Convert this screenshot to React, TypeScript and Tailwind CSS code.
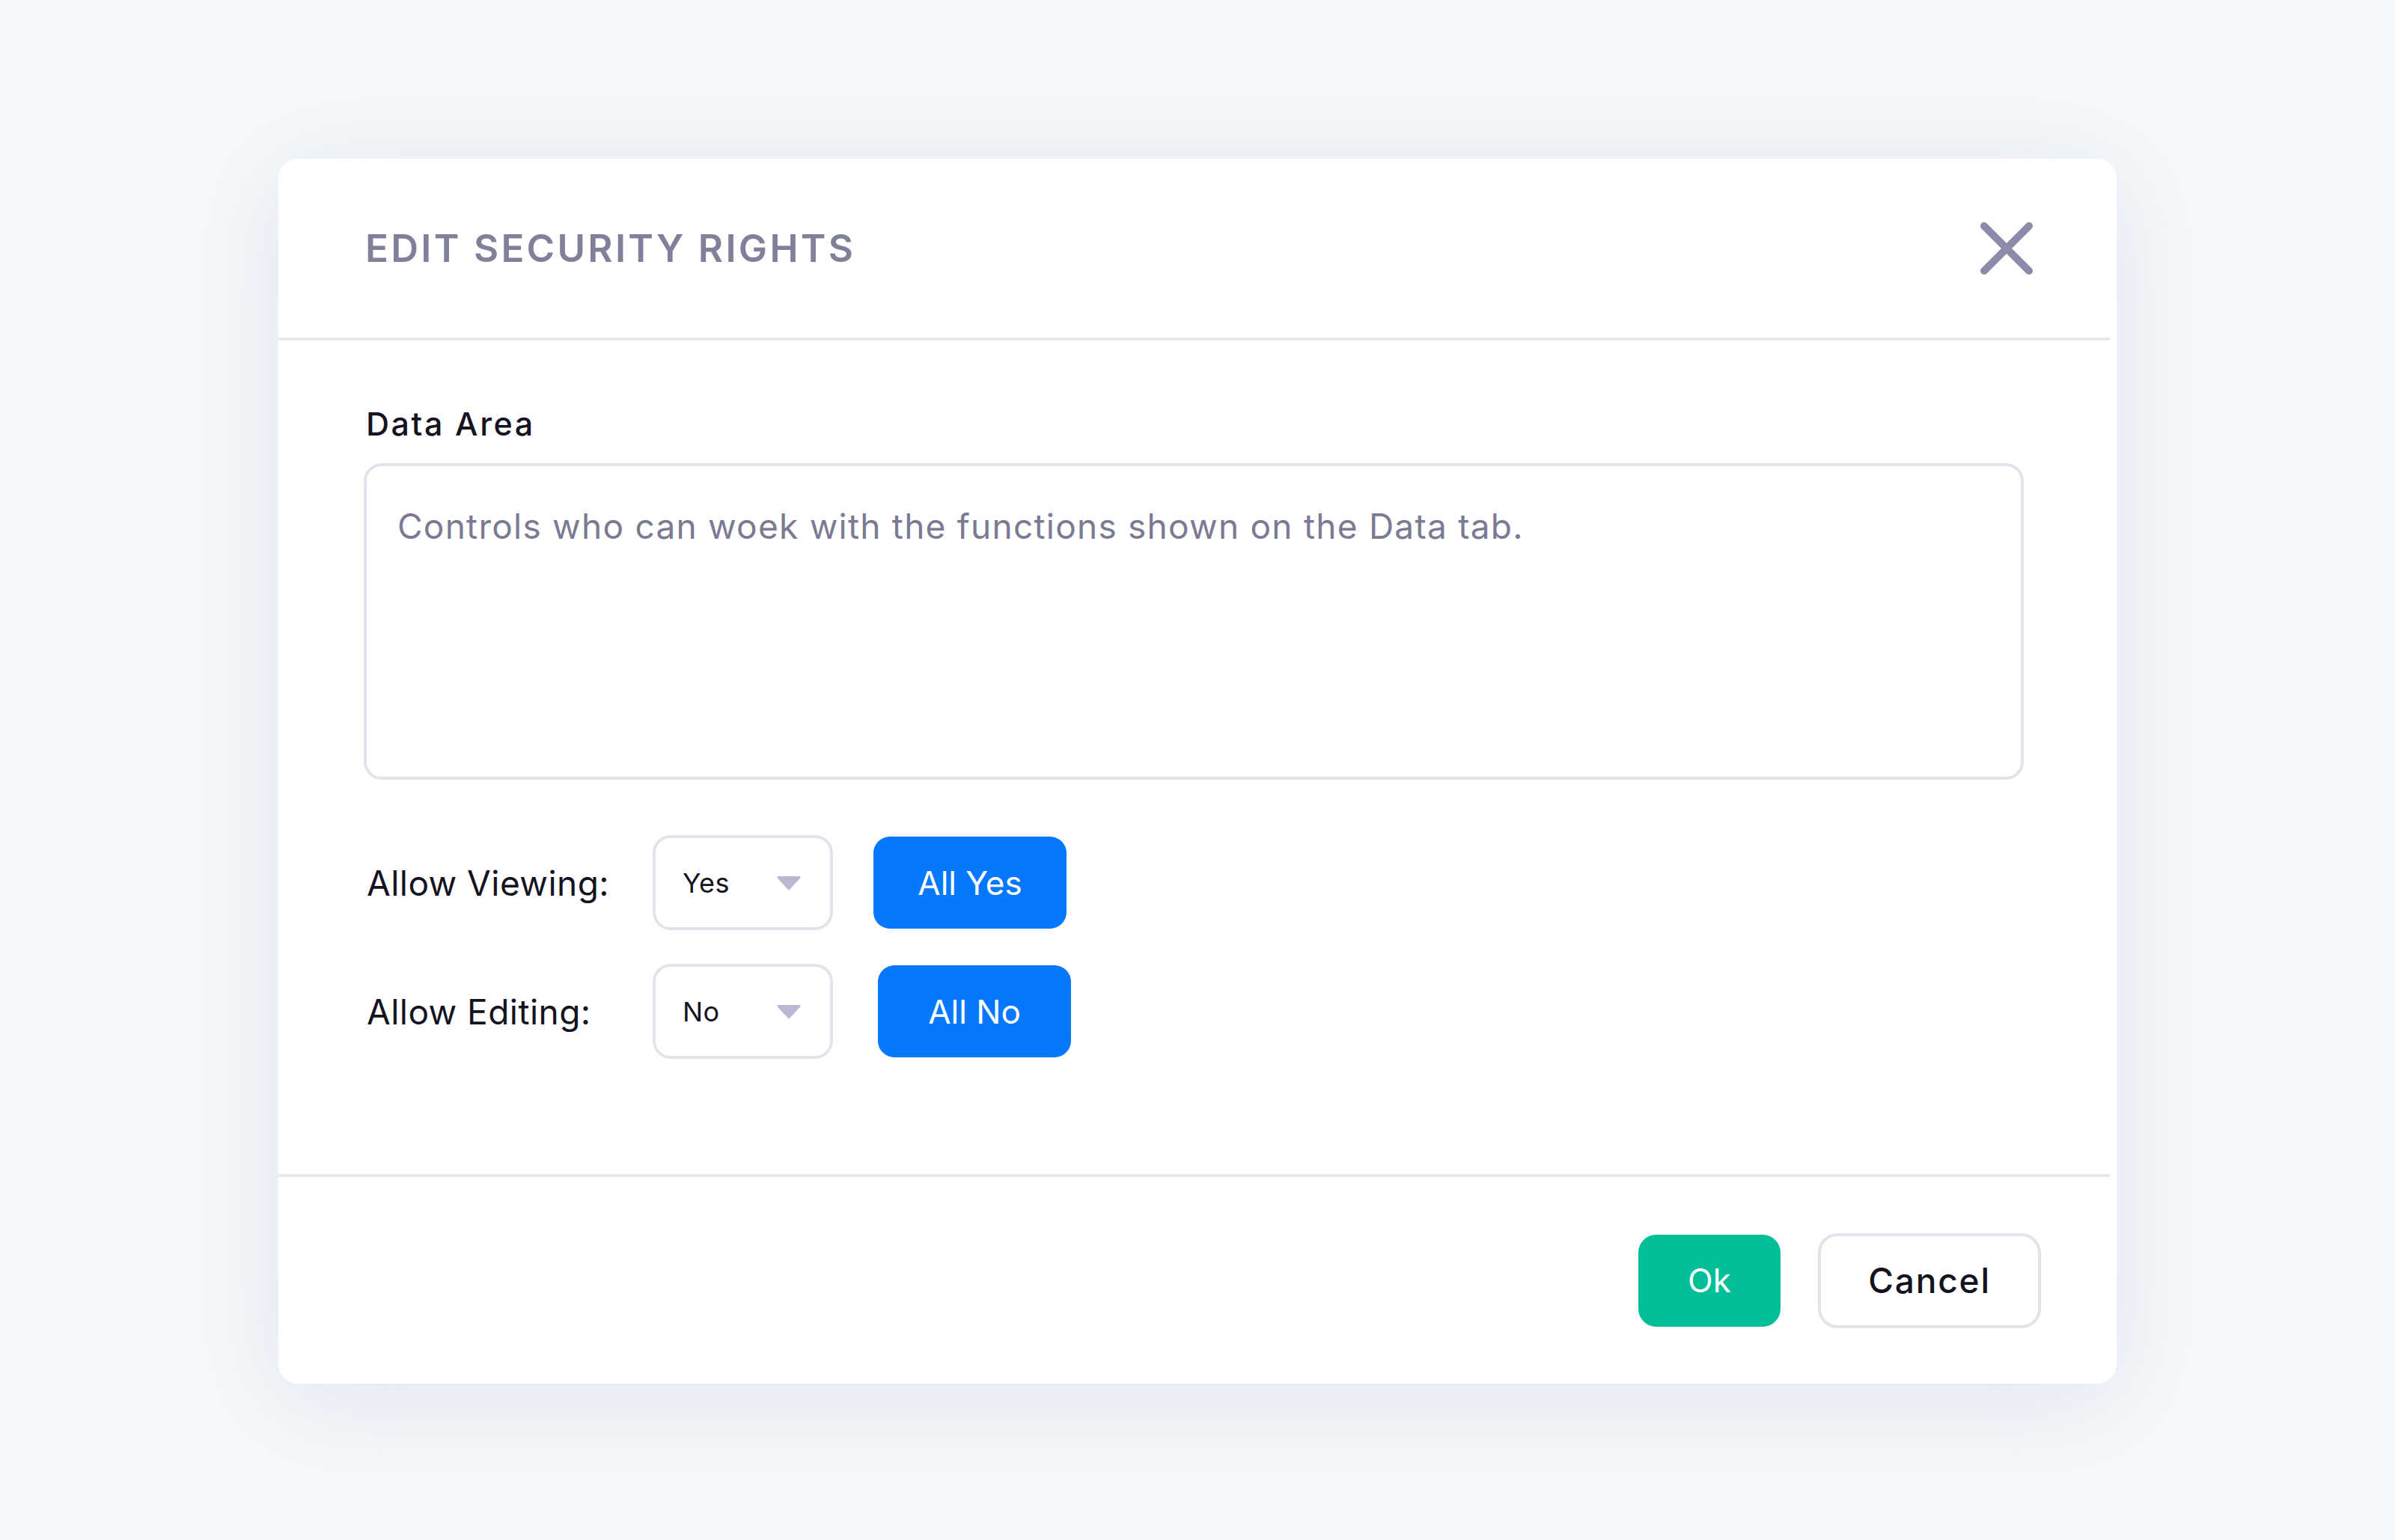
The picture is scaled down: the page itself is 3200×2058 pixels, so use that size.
import { useState } from "react";

const font = { fontFamily: "Inter, 'Noto Sans', sans-serif" };

function CloseIcon() {
  return (
    <svg width="72" height="72" viewBox="0 0 72 72" fill="none">
      <path d="M6 6 L66 66 M66 6 L6 66" stroke="#8a8ca9" strokeWidth="10" strokeLinecap="round" />
    </svg>
  );
}

function Caret() {
  return (
    <svg width="32" height="20" viewBox="0 0 32 20">
      <path d="M2 1 H30 a1.5 1.5 0 0 1 1.2 2.4 L17.2 18.6 a1.5 1.5 0 0 1 -2.4 0 L0.8 3.4 A1.5 1.5 0 0 1 2 1 Z" fill="#b9b8d3" />
    </svg>
  );
}

function Select({ value }: { value: string }) {
  return (
    <div className="flex h-[127px] w-[241px] items-center justify-between rounded-[24px] border-[4px] border-[#e3e4eb] bg-white pl-[36px] pr-[39px]">
      <span className="text-[36px] leading-none tracking-[0.01em] text-[#14131f]">{value}</span>
      <Caret />
    </div>
  );
}

function RightsRow({
  label,
  value,
  action,
  gap,
}: {
  label: string;
  value: string;
  action: string;
  gap: string;
}) {
  return (
    <div className="flex items-center">
      <div className="w-[386px] pl-[4px] text-[46px] leading-none tracking-[0.01em] text-[#14131f]">{label}</div>
      <Select value={value} />
      <button
        className={`${gap} flex h-[123px] w-[258px] items-center justify-center rounded-[22px] bg-[#0578fd] text-[44px] leading-none text-white`}
      >
        {action}
      </button>
    </div>
  );
}

export default function App() {
  const [text] = useState("Controls who can woek with the functions shown on the Data tab.");

  return (
    <div className="min-h-[2058px] w-full bg-[#f6f9fc] pl-[372px] pt-[212px]" style={font}>
      <div className="w-[2456px] rounded-[26px] bg-white shadow-[0_20px_140px_rgba(170,185,210,0.30)]">
        {/* header */}
        <div className="flex h-[239px] items-center justify-between pl-[116px] pr-[111px]">
          <h1 className="text-[51px] font-semibold uppercase leading-none tracking-[0.065em] text-[#80809a]">
            Edit Security Rights
          </h1>
          <CloseIcon />
        </div>
        <div className="mr-[9px] h-[4px] bg-[#e8e9ee]" />

        {/* body */}
        <div className="pb-[154px] pl-[114px] pr-[124px] pt-[90px]">
          <div className="pl-[3px] text-[43px] font-medium leading-none tracking-[0.06em] text-[#14131f]">
            Data Area
          </div>
          <div className="mt-[31px] h-[423px] w-[2218px] rounded-[24px] border-[4px] border-[#e3e4eb] pl-[41px] pt-[57px]">
            <p className="text-[46px] leading-none tracking-[0.027em] text-[#7b7a93]">{text}</p>
          </div>
          <div className="mt-[74px] flex flex-col gap-[45px]">
            <RightsRow label="Allow Viewing:" value="Yes" action="All Yes" gap="ml-[54px]" />
            <RightsRow label="Allow Editing:" value="No" action="All No" gap="ml-[60px]" />
          </div>
        </div>

        <div className="mr-[9px] h-[4px] bg-[#e8e9ee]" />

        {/* footer */}
        <div className="flex h-[276px] items-center justify-end gap-[50px] pr-[101px]">
          <button className="flex h-[123px] w-[190px] items-center justify-center rounded-[24px] bg-[#00bf96] text-[44px] leading-none text-white">
            Ok
          </button>
          <button className="flex h-[127px] w-[298px] items-center justify-center rounded-[26px] border-[4px] border-[#e3e4eb] bg-white text-[46px] font-medium leading-none tracking-[0.04em] text-[#14131f]">
            Cancel
          </button>
        </div>
      </div>
    </div>
  );
}
